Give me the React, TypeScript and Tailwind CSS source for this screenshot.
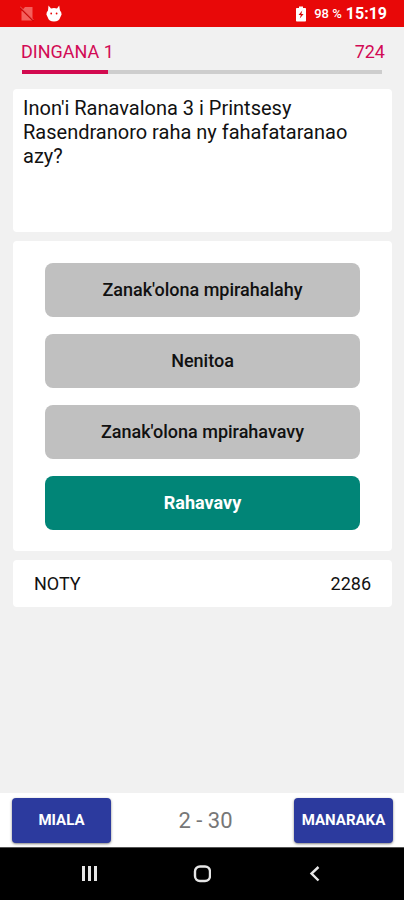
const answers = [
  { text: "Zanak'olona mpirahalahy", chosen: false },
  { text: "Nenitoa", chosen: false },
  { text: "Zanak'olona mpirahavavy", chosen: false },
  { text: "Rahavavy", chosen: true },
];

function StatusBar() {
  return (
    <div className="flex h-[27px] items-center justify-between bg-[#e80808] pt-px pr-[17px] pl-5 text-white">
      <div className="flex items-center gap-3">
        <svg width="14" height="16" viewBox="0 0 14 16" aria-hidden="true">
          <path d="M5 1h7.500v13.500H1.500V5z" fill="#f4605c" />
          <path d="M0 1.500 13.500 15" stroke="#c90808" strokeWidth="1.600" />
          <path d="M0 .5 13.500 14" stroke="#f4706c" strokeWidth=".8" />
        </svg>
        <svg width="16" height="18" viewBox="0 0 16 18" aria-hidden="true">
          <path
            d="M2.500 .5 5 3.500Q8 2.600 11 3.500L13.200 .5 14 5.500Q15.600 7 15.600 9.500L14.200 12.500Q13.200 16.500 8 16.500T1.800 12.500L.4 9.500Q.4 7 2 5.500Z"
            fill="#fff"
          />
          <circle cx="5.200" cy="8.500" r=".9" fill="#e80808" />
          <circle cx="10.600" cy="8.500" r=".9" fill="#e80808" />
        </svg>
      </div>
      <div className="flex items-center">
        <svg width="10" height="16" viewBox="0 0 10 16" className="mr-2" aria-hidden="true">
          <path d="M3 .5h4V2h2.200q.8 0 .8.800v11.900q0 .8-.8.800H.8q-.8 0-.8-.8V2.800Q0 2 .8 2H3z" fill="#fff" />
          <path d="M6.300 4.500 2.500 9h2.300l-1 3.500L7.600 8H5.300z" fill="#d80808" />
        </svg>
        <span className="mr-1 text-[13px] font-medium">98 %</span>
        <span className="text-base font-bold">15:19</span>
      </div>
    </div>
  );
}

function NavigationBar() {
  return (
    <nav aria-label="System" className="flex h-[53px] items-center justify-center gap-24 border-t border-[#555] bg-black text-[#e6e6e6]">
      <button type="button" aria-label="Recent apps">
        <svg width="16" height="16" viewBox="0 0 16 16" fill="none" stroke="currentColor" strokeWidth="3">
          <path d="M2.500 0v15M8.500 0v15M14.500 0v15" />
        </svg>
      </button>
      <button type="button" aria-label="Home">
        <svg width="18" height="18" viewBox="0 0 18 18" fill="none" stroke="currentColor" strokeWidth="2.400">
          <rect x="2" y="1.500" width="15" height="14.500" rx="5" />
        </svg>
      </button>
      <button type="button" aria-label="Back">
        <svg width="16" height="16" viewBox="0 0 16 16" fill="none" stroke="currentColor" strokeWidth="2.400">
          <path d="M11.500 1 4.500 7.500l7 7" />
        </svg>
      </button>
    </nav>
  );
}

export default function App() {
  return (
    <div className="flex min-h-screen flex-col bg-[#f1f1f1] font-[Roboto,sans-serif] text-[#111]">
      <StatusBar />
      <header className="pt-[13px] text-[#d20a55]">
        <div className="flex justify-between pr-[19px] pl-[21px] text-lg leading-6">
          <h1>DINGANA 1</h1>
          <span>724</span>
        </div>
        <div
          role="progressbar"
          aria-label="DINGANA 1"
          aria-valuenow={24}
          aria-valuemin={0}
          aria-valuemax={100}
          className="mx-[22px] mt-[6px] h-1 bg-[#cdcdcd]"
        >
          <div className="h-full w-[24%] bg-[#d20a4f]" />
        </div>
      </header>
      <main className="flex flex-1 flex-col gap-[9px] pt-[15px] pr-3 pl-[13px]">
        <section className="min-h-[143px] rounded-[4px] bg-white px-[10px] py-[7px] text-xl leading-6">
          <p>Inon'i Ranavalona 3 i Printsesy Rasendranoro raha ny fahafataranao azy?</p>
        </section>
        <section className="flex flex-col gap-[17px] rounded-[4px] bg-white px-8 pt-[22px] pb-[21px]">
          {answers.map((answer) => (
            <button
              key={answer.text}
              type="button"
              className={
                answer.chosen
                  ? "h-[54px] rounded-lg bg-[#018577] text-lg font-bold text-white"
                  : "h-[54px] rounded-lg bg-[#c0c0c0] text-lg font-medium text-[#111]"
              }
            >
              {answer.text}
            </button>
          ))}
        </section>
        <section className="flex h-[47px] items-center justify-between rounded-[4px] bg-white px-[21px] text-lg">
          <span>NOTY</span>
          <span>2286</span>
        </section>
      </main>
      <footer className="flex h-[54px] items-center justify-between bg-white pr-[11px] pl-3">
        <button type="button" className="h-[45px] w-[99px] rounded-[4px] bg-[#2c3a9e] text-[15px] font-bold text-white shadow-sm shadow-black/40">
          MIALA
        </button>
        <span className="pl-[6px] text-[22px] text-[#777]">2 - 30</span>
        <button type="button" className="h-[45px] w-[99px] rounded-[4px] bg-[#2c3a9e] text-[15px] font-bold text-white shadow-sm shadow-black/40">
          MANARAKA
        </button>
      </footer>
      <NavigationBar />
    </div>
  );
}
